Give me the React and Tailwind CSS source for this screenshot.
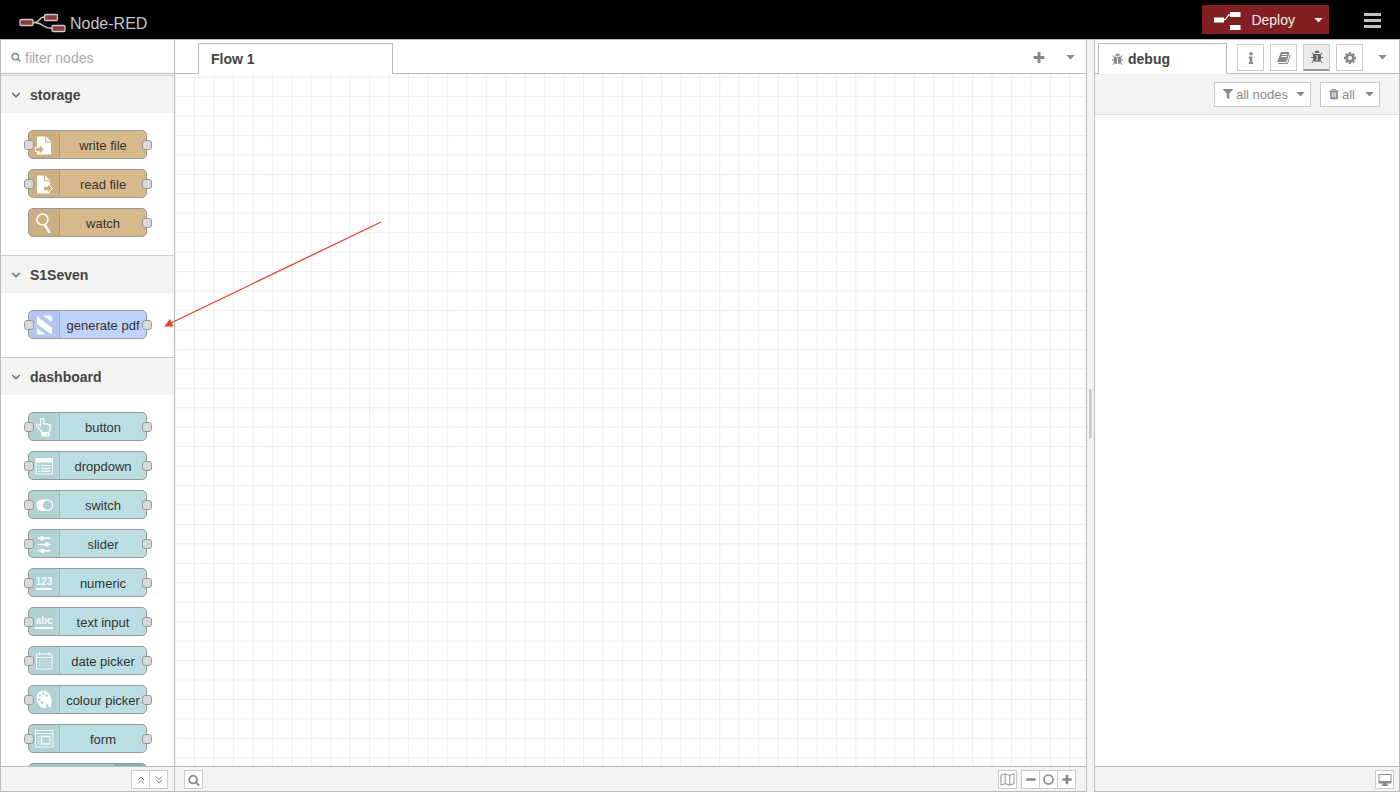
import React, { useState } from 'react';
import { FaInfo, FaFilter } from 'react-icons/fa';

// Solid glyphs, all on a 1792 unit grid
const glyphs = {
  search:
    'M1216 832q0-185-131.5-316.5t-316.5-131.5-316.5 131.5-131.5 316.5 131.5 316.5 316.5 131.5 316.5-131.5 131.5-316.5zm512 832q0 52-38 90t-90 38q-54 0-90-38l-343-342q-179 124-399 124-143 0-273.5-55.5t-225-150-150-225-55.5-273.5 55.5-273.5 150-225 225-150 273.5-55.5 273.5 55.5 225 150 150 225 55.5 273.5q0 220-124 399l343 343q37 37 37 90z',
  bug: 'M1696 960q0 26-19 45t-45 19h-224q0 171-67 290l208 209q19 19 19 45t-19 45q-18 19-45 19t-45-19l-198-197q-5 5-15 13t-42 28.5-65 36.5-82 29-97 13v-896h-128v896q-51 0-101.5-13.5t-87-33-66-39-43.5-32.5l-15-14-183 207q-20 21-48 21-24 0-43-16-19-18-20.5-44.5t15.5-46.5l202-227q-58-114-58-274h-224q-26 0-45-19t-19-45 19-45 45-19h224v-294l-173-173q-19-19-19-45t19-45 45-19 45 19l173 173h844l173-173q19-19 45-19t45 19 19 45-19 45l-173 173v294h224q26 0 45 19t19 45zm-480-576h-640q0-133 93.5-226.5t226.5-93.5 226.5 93.5 93.5 226.5z',
  cog: 'M1152 896q0-106-75-181t-181-75-181 75-75 181 75 181 181 75 181-75 75-181zm512-109v222q0 12-8 23t-20 13l-185 28q-19 54-39 91 35 50 107 138 10 12 10 25t-9 23q-27 37-99 108t-94 71q-12 0-26-9l-138-108q-44 23-91 38-16 136-29 186-7 28-36 28h-222q-14 0-24.5-8.5t-11.5-21.5l-28-184q-49-16-90-37l-141 107q-10 9-25 9-14 0-25-11-126-114-165-168-7-10-7-23 0-12 8-23 15-21 51-66.5t54-70.5q-27-50-41-99l-183-27q-13-2-21-12.5t-8-23.5v-222q0-12 8-23t19-13l186-28q14-46 39-92-40-57-107-138-10-12-10-24 0-10 9-23 26-36 98.5-107.5t94.5-71.5q13 0 26 10l138 107q44-23 91-38 16-136 29-186 7-28 36-28h222q14 0 24.5 8.5t11.5 21.5l28 184q49 16 90 37l142-107q9-9 24-9 13 0 25 10 129 119 165 170 7 8 7 22 0 12-8 23-15 21-51 66.5t-54 70.5q26 50 41 98l183 28q13 2 21 12.5t8 23.5z',
  book: 'M1703 478q40 57 18 129l-275 906q-19 64-76.5 107.5t-122.5 43.5h-923q-77 0-148.5-53.5t-99.5-131.5q-24-67-2-127 0-4 3-27t4-37q1-8-3-21.5t-3-19.5q2-11 8-21t16.5-23.5 16.5-23.5q23-38 45-91.5t30-91.5q3-10 .5-30t-.5-28q3-11 17-28t17-23q21-36 42-92t25-90q1-9-2.5-32t.5-28q4-13 22-30.5t22-22.5q19-26 42.5-84.5t27.5-96.5q1-8-3-25.5t-2-26.5q2-8 9-18t18-23 17-21q8-12 16.5-30.5t15-35 16-36 19.5-32 26.5-23.5 36-11.5 47.5 5.5l-1 3q38-9 51-9h761q74 0 114 56t18 130l-274 906q-36 119-71.5 153.5t-128.5 34.5h-869q-27 0-38 15-11 16-1 43 24 70 144 70h923q29 0 56-15.5t35-41.5l300-987q7-22 5-57 38 15 59 43zm-1064 2q-4 13 2 22.5t20 9.5h608q13 0 25.5-9.5t16.5-22.5l21-64q4-13-2-22.5t-20-9.5h-608q-13 0-25.5 9.5t-16.5 22.5zm-83 256q-4 13 2 22.5t20 9.5h608q13 0 25.5-9.5t16.5-22.5l21-64q4-13-2-22.5t-20-9.5h-608q-13 0-25.5 9.5t-16.5 22.5z',
  trash:
    'M704 1376v-704q0-14-9-23t-23-9h-64q-14 0-23 9t-9 23v704q0 14 9 23t23 9h64q14 0 23-9t9-23zm256 0v-704q0-14-9-23t-23-9h-64q-14 0-23 9t-9 23v704q0 14 9 23t23 9h64q14 0 23-9t9-23zm256 0v-704q0-14-9-23t-23-9h-64q-14 0-23 9t-9 23v704q0 14 9 23t23 9h64q14 0 23-9t9-23zm-544-992h448l-48-117q-7-9-17-11h-317q-10 2-17 11zm928 32v64q0 14-9 23t-23 9h-96v948q0 83-47 143.5t-113 60.5h-832q-66 0-113-58.5t-47-141.5v-952h-96q-14 0-23-9t-9-23v-64q0-14 9-23t23-9h309l70-167q15-37 54-63t79-26h320q40 0 79 26t54 63l70 167h309q14 0 23 9t9 23z',
  plus: 'M1600 736v192q0 40-28 68t-68 28h-416v416q0 40-28 68t-68 28h-192q-40 0-68-28t-28-68v-416h-416q-40 0-68-28t-28-68v-192q0-40 28-68t68-28h416v-416q0-40 28-68t68-28h192q40 0 68 28t28 68v416h416q40 0 68 28t28 68z',
  minus: 'M1600 736v192q0 40-28 68t-68 28h-1216q-40 0-68-28t-28-68v-192q0-40 28-68t68-28h1216q40 0 68 28t28 68z',
};

function Glyph({ name, className }) {
  return (
    <svg viewBox="0 0 1792 1792" fill="currentColor" className={`shrink-0 ${className}`}>
      <path d={glyphs[name]} />
    </svg>
  );
}

function Caret() {
  return (
    <svg viewBox="0 0 9 5" fill="currentColor" className="h-[5px] w-[9px] shrink-0">
      <path d="M.3 0h8.400L4.500 4.600z" />
    </svg>
  );
}

// 20x20 drawings shown in the icon area of each palette node
const nodeIcons = {
  write: (
    <g fill="white">
      <path d="M3 1.500h8v6h6v12H3z" />
      <path d="M12.200 1.500l5 5h-5z" />
      <path d="M1.300 12.300h4V9.700l5 4.800-5 4.800v-2.600h-4z" fill="#cdb085" stroke="white" />
    </g>
  ),
  read: (
    <g fill="white">
      <path d="M3 1.500h7v6h6v12H3z" />
      <path d="M11.200 1.500l5 5h-5z" />
      <path d="M9.500 12.300h4V9.700l5 4.800-5 4.800v-2.600h-4z" fill="#cdb085" stroke="white" />
    </g>
  ),
  watch: (
    <g fill="none" stroke="white">
      <circle cx="8.500" cy="6.500" r="5.500" strokeWidth="1.500" />
      <path d="M11.500 13l4 6.500" strokeWidth="2.600" strokeLinecap="round" />
      <path d="M10.500 11l1.500 2.500" strokeWidth="1.300" />
    </g>
  ),
  pdf: (
    <g fill="white">
      <path d="M3 1l15 12v4.500q0 2-2 1L3 9z" />
      <path d="M9 .5h7.500q1.500 0 1.500 1.500v5z" />
      <path d="M3 13l8.500 6.500h-7Q3 19.500 3 18z" />
    </g>
  ),
  button: (
    <g fill="none" stroke="white" strokeWidth="1.200" strokeLinejoin="round">
      <path d="M6.500 9V3a1.700 1.700 0 0 1 3.400 0v4q1.200-1 2.300.3 1.300-.8 2.200.4 1.700-.4 2.100 1.300.3 3.500-1.800 6.700H7.800L6.500 13 2.700 9.200Q1.800 6.800 4 7.200z" />
      <path d="M7.500 15.700h8v3.800h-8z" fill="white" stroke="none" />
      <circle cx="13.200" cy="17.600" r=".8" fill="#afd1d4" stroke="none" />
    </g>
  ),
  dropdown: (
    <g fill="none" stroke="white">
      <path d="M2 2.500h16.500v15.500H2z" />
      <path d="M1.500 2h17.500v4.500H1.500z" fill="white" stroke="none" />
      <path d="M4 9.500h1.500M7 9.500h9.500M4 12.300h1.500M7 12.300h9.500M4 15.100h1.500M7 15.100h9.500" strokeWidth="1.200" />
    </g>
  ),
  switch: (
    <path
      d="M8 4.500h5.500a5.700 5.700 0 0 1 0 11.400H8a5.700 5.700 0 0 1 0-11.400zm5.500 1.100a4.600 4.600 0 0 0 0 9.200 4.600 4.600 0 0 0 0-9.200z"
      fill="white"
      fillRule="evenodd"
    />
  ),
  slider: (
    <g fill="white" stroke="white" strokeWidth="1.600">
      <path d="M3.500 4.200h13M3.500 10.500h13M3.500 16.800h13" />
      <path d="M7 3h2v2.400H7zM12 9.300h2v2.400h-2zM7.500 15.600h2V18h-2z" strokeLinejoin="round" />
    </g>
  ),
  date: (
    <g fill="none" stroke="white" strokeOpacity=".9">
      <rect x="2.500" y="3" width="15.500" height="15" rx="1" />
      <path d="M2.500 6.500H18M5.500 1v3.500M15 1v3.500" />
      <path d="M5 9.500h11M5 12h11M5 14.500h11" strokeDasharray="1.200 1.200" strokeOpacity=".7" />
    </g>
  ),
  colour: (
    <g fill="#afd1d4">
      <path
        d="M9 .7C4.500.7 2.300 4.500 2.700 9c.5 5 4 8.500 7.300 9.200 2.800.5 1.500-2.400 2.200-4 .8-1.500 2 1 2.300 2.300.4 1.400 1.800 1 2.400-.5C19.300 8.500 15.500.7 9 .7z"
        fill="white"
      />
      <circle cx="5.300" cy="9.500" r="1.300" />
      <circle cx="5.800" cy="5.500" r="1.300" />
      <circle cx="9.300" cy="3.400" r="1.200" />
      <circle cx="12.600" cy="5.500" r="1.300" />
      <circle cx="8" cy="12.500" r="1.300" />
    </g>
  ),
  form: (
    <g fill="none" stroke="white" strokeOpacity=".85">
      <path d="M1.500 1.500h17.500V18H1.500zM1.500 4.500H19" />
      <path d="M7.500 7.500H16V15H7.500z" strokeWidth="1.400" />
      <path d="M3.500 7.500h1.800M3.500 10h1.800M3.500 12.500h1.800M3.500 15h1.800" />
    </g>
  ),
};

const categories = [
  {
    name: 'storage',
    color: 'bg-[#d8b98c]',
    nodes: [
      { label: 'write file', icon: 'write', input: true },
      { label: 'read file', icon: 'read', input: true },
      { label: 'watch', icon: 'watch', input: false },
    ],
  },
  {
    name: 'S1Seven',
    color: 'bg-[#bfd2f9]',
    nodes: [{ label: 'generate pdf', icon: 'pdf', input: true }],
  },
  {
    name: 'dashboard',
    color: 'bg-[#badee1]',
    nodes: [
      { label: 'button', icon: 'button', input: true },
      { label: 'dropdown', icon: 'dropdown', input: true },
      { label: 'switch', icon: 'switch', input: true },
      { label: 'slider', icon: 'slider', input: true },
      { label: 'numeric', icon: 'numeric', input: true },
      { label: 'text input', icon: 'text', input: true },
      { label: 'date picker', icon: 'date', input: true },
      { label: 'colour picker', icon: 'colour', input: true },
      { label: 'form', icon: 'form', input: true },
      { label: 'text', icon: 'output', input: true, dark: true },
    ],
  },
];

function NodeIcon({ name }) {
  if (name === 'numeric' || name === 'text') {
    return (
      <span className="border-b-2 border-white/90 text-[10px] leading-3 font-bold text-white/85">
        {name === 'numeric' ? '123' : 'abc'}
      </span>
    );
  }
  return <svg viewBox="0 0 20 20" className="size-5">{nodeIcons[name]}</svg>;
}

function Port({ side }) {
  return (
    <span
      className={`absolute top-[9px] size-[10px] rounded-[3px] border border-[#999] bg-[#d9d9d9] ${
        side === 'left' ? '-left-[5px]' : '-right-[6px]'
      }`}
    />
  );
}

function PaletteNode({ node, color }) {
  return (
    <div
      className={`relative flex h-[29px] w-[119px] shrink-0 rounded-[5px] border border-[#999] ${
        node.dark ? 'bg-[#8fc7cc]' : color
      }`}
    >
      {node.dark ? (
        <div className="ml-auto w-[31px] rounded-r border-l border-black/10 bg-black/10" />
      ) : (
        <>
          <div className="flex w-[31px] items-center justify-center rounded-l border-r border-black/10 bg-black/5">
            <NodeIcon name={node.icon} />
          </div>
          <div className="flex flex-1 items-center justify-center pt-[2px] text-[13px] whitespace-nowrap text-[#333]">
            {node.label}
          </div>
          {node.input && <Port side="left" />}
          <Port side="right" />
        </>
      )}
    </div>
  );
}

function Category({ category }) {
  const [open, setOpen] = useState(true);
  return (
    <section>
      <button
        onClick={() => setOpen(!open)}
        className="flex h-[38px] w-full items-center border-t border-[#ccc] bg-[#f3f3f3] pt-[2px] pl-[10px] text-[14px] font-bold text-[#444]"
      >
        <svg viewBox="0 0 10 6" fill="none" stroke="#666" strokeWidth="1.300" className="mr-[9px] mb-[2px] h-[6px] w-[10px]">
          <path d="M1.200 1L5 4.800 8.800 1" />
        </svg>
        {category.name}
      </button>
      {open && (
        <div className="flex flex-col gap-[10px] pt-[17px] pb-[18px] pl-[27px]">
          {category.nodes.map((node) => (
            <PaletteNode key={node.label} node={node} color={category.color} />
          ))}
        </div>
      )}
    </section>
  );
}

function Header() {
  return (
    <header className="flex h-10 shrink-0 items-center border-b border-[#bbb] bg-black px-[19px]">
      <svg viewBox="0 0 47 20" className="mt-[6px] h-5 w-[47px]">
        <g fill="none" stroke="#ccc" strokeWidth="1.300">
          <path d="M14 9.500c9 0 4-5.500 12-5.500M14 9.500c12 0 8 6 19 6" />
          <g fill="#8f3a38">
            <rect x="1" y="6.500" width="13" height="6" rx="1.200" />
            <rect x="25.500" y="1.500" width="13" height="6" rx="1.200" />
            <rect x="33" y="12.500" width="13" height="6" rx="1.200" />
          </g>
        </g>
      </svg>
      <h1 className="mt-2 ml-1 text-[16px] leading-5 text-[#c7c7c7]">Node-RED</h1>
      <div className="ml-auto flex h-[29px] bg-[#811f22] text-[#eee]">
        <button className="flex items-center pt-[2px] pl-3 text-[14px]">
          <svg viewBox="0 0 27 18" className="mr-[10px] h-[18px] w-[27px]">
            <g fill="white">
              <path d="M0 5.500h10v5H0zM16 0h10.500v5H16zM16 13h10.500v5H16z" />
              <path d="M9 8c5 0 3-5.500 8-5.500" fill="none" stroke="white" strokeWidth="1.300" />
            </g>
          </svg>
          Deploy
        </button>
        <button aria-label="Deploy options" className="flex w-[34px] items-center justify-center pt-[2px] pl-3">
          <Caret />
        </button>
      </div>
      <button aria-label="Menu" className="mt-[2px] ml-[35px] flex w-[17px] flex-col gap-[3px]">
        <span className="h-[3px] w-full bg-[#c0c0c0]" />
        <span className="h-[3px] w-full bg-[#c0c0c0]" />
        <span className="h-[3px] w-full bg-[#c0c0c0]" />
      </button>
    </header>
  );
}

function SmallButton({ label, joined, children }) {
  return (
    <button
      aria-label={label}
      className={`flex size-[19px] items-center justify-center border border-[#ccc] bg-white text-[#888] ${
        joined ? '-ml-px' : ''
      }`}
    >
      {children}
    </button>
  );
}

function Palette() {
  const [filter, setFilter] = useState('');
  return (
    <aside className="flex w-[175px] shrink-0 flex-col border-r border-l border-[#bbb] bg-white">
      <label className="flex h-[34px] shrink-0 items-center border-b border-[#bbb] pt-[2px] pl-[10px]">
        <Glyph name="search" className="mr-1 mb-[2px] size-[10px] text-[#888]" />
        <input
          type="text"
          aria-label="filter nodes"
          placeholder="filter nodes"
          value={filter}
          onChange={(e) => setFilter(e.target.value)}
          className="w-full min-w-0 pt-[2px] text-[14px] text-[#444] outline-none placeholder:text-[#aaa]"
        />
      </label>
      <div className="min-h-0 flex-1 overflow-hidden pt-px">
        {categories.map((category) => (
          <Category key={category.name} category={category} />
        ))}
      </div>
      <footer className="flex h-[26px] shrink-0 items-center justify-end border-t border-b border-[#bbb] bg-[#f3f3f3] pt-px pr-[6px]">
        <SmallButton label="Collapse all">
          <svg viewBox="0 0 8 8" fill="none" stroke="currentColor" className="size-2">
            <path d="M1 4l3-3 3 3M1 7.500l3-3 3 3" />
          </svg>
        </SmallButton>
        <SmallButton label="Expand all" joined>
          <svg viewBox="0 0 8 8" fill="none" stroke="currentColor" className="size-2">
            <path d="M1 .5l3 3 3-3M1 4l3 3 3-3" />
          </svg>
        </SmallButton>
      </footer>
    </aside>
  );
}

function Workspace() {
  return (
    <main className="flex min-w-0 flex-1 flex-col border-r border-[#bbb] bg-white">
      <div className="flex h-[34px] shrink-0 items-end">
        <div className="h-full w-[23px] border-b border-[#bbb]" />
        <button className="h-[31px] w-[195px] border border-b-0 border-[#bbb] pl-3 text-left text-[14px] font-bold text-[#444]">
          Flow 1
        </button>
        <div className="flex h-full flex-1 items-center justify-end border-b border-[#bbb] pt-[2px] pr-[11px] text-[#888]">
          <button aria-label="Add flow"><Glyph name="plus" className="size-[14px]" /></button>
          <button aria-label="List flows" className="ml-5"><Caret /></button>
        </div>
      </div>
      <div className="relative min-h-0 flex-1 overflow-hidden">
        <svg className="absolute inset-0 size-full">
          <defs>
            <pattern id="grid" x="19" y="2.500" width="19.450" height="19.450" patternUnits="userSpaceOnUse">
              <path d="M.5 0v19.450M0 .5h19.450" fill="none" stroke="#eee" strokeWidth="1.200" />
            </pattern>
          </defs>
          <rect width="100%" height="100%" fill="url(#grid)" />
        </svg>
      </div>
      <footer className="flex h-[26px] shrink-0 items-center border-t border-b border-[#bbb] bg-[#f3f3f3] pt-px pr-[10px] pl-[9px]">
        <SmallButton label="Search flows"><Glyph name="search" className="size-3" /></SmallButton>
        <div className="ml-auto flex">
          <SmallButton label="Toggle navigator">
            <svg viewBox="0 0 16 14" className="h-[13px] w-[15px] shrink-0" fill="none" stroke="currentColor">
              <path d="M1 2.500L5.500 1l5 1.500L15 1v10.500L10.500 13l-5-1.500L1 13zM5.500 1v10.500M10.500 2.500V13" />
            </svg>
          </SmallButton>
          <div className="ml-1 flex">
            <SmallButton label="Zoom out"><Glyph name="minus" className="size-3" /></SmallButton>
            <SmallButton label="Reset zoom" joined>
              <svg viewBox="0 0 11 11" fill="none" stroke="currentColor" strokeWidth="1.600" className="size-[11px]">
                <circle cx="5.500" cy="5.500" r="4.500" />
              </svg>
            </SmallButton>
            <SmallButton label="Zoom in" joined><Glyph name="plus" className="size-3" /></SmallButton>
          </div>
        </div>
      </footer>
    </main>
  );
}

function SidebarTab({ label, active, children }) {
  return (
    <button
      aria-label={label}
      className={`flex size-[27px] items-center justify-center border ${
        active ? 'border-[#ccc] border-b-2 border-b-[#999] bg-[#ebebeb] text-[#666]' : 'border-[#ccc] bg-white text-[#888]'
      }`}
    >
      {children}
    </button>
  );
}

function Sidebar() {
  return (
    <aside className="flex w-[306px] shrink-0 flex-col border-r border-l border-[#bbb] bg-white">
      <div className="flex h-[34px] shrink-0 items-end">
        <div className="h-full w-[3px] border-b border-[#bbb]" />
        <button className="flex h-[31px] w-[129px] items-center border border-b-0 border-[#bbb] pl-3 text-[14px] font-bold text-[#444]">
          <Glyph name="bug" className="mr-1 size-[13px] text-[#888]" />
          debug
        </button>
        <div className="flex h-full flex-1 items-center gap-[6px] border-b border-[#bbb] pt-[2px] pl-[10px]">
          <SidebarTab label="Information"><FaInfo className="size-3" /></SidebarTab>
          <SidebarTab label="Help"><Glyph name="book" className="size-[14px]" /></SidebarTab>
          <SidebarTab label="Debug messages" active><Glyph name="bug" className="size-[14px]" /></SidebarTab>
          <SidebarTab label="Configuration nodes"><Glyph name="cog" className="size-[14px]" /></SidebarTab>
          <button aria-label="More tabs" className="ml-[9px] text-[#888]"><Caret /></button>
        </div>
      </div>
      <div className="flex h-[41px] shrink-0 items-center justify-end gap-[9px] border-b border-[#ddd] bg-[#f3f3f3] pr-[19px] text-[13px] text-[#888]">
        <button className="flex h-[25px] items-center border border-[#ccc] bg-white pr-[5px] pl-2">
          <FaFilter className="mr-[3px] size-[10px]" />
          <span className="mr-2 pt-px">all nodes</span>
          <Caret />
        </button>
        <button className="flex h-[25px] items-center border border-[#ccc] bg-white pr-[5px] pl-[7px]">
          <Glyph name="trash" className="mr-[2px] size-3" />
          <span className="mr-[10px] pt-px">all</span>
          <Caret />
        </button>
      </div>
      <div className="flex-1" />
      <footer className="flex h-[26px] shrink-0 items-center justify-end border-t border-b border-[#bbb] bg-[#f3f3f3] pt-px pr-[5px]">
        <SmallButton label="Open debug window">
          <svg viewBox="0 0 14 12" className="h-3 w-[14px] shrink-0" fill="currentColor">
            <path d="M1.500 0h11q1 0 1 1v7.500q0 1-1 1h-11q-1 0-1-1V1q0-1 1-1zm0 1v6h11V1z" fillRule="evenodd" />
            <path d="M5 9h4v1.500h1V12H4v-1.500h1z" />
          </svg>
        </SmallButton>
      </footer>
    </aside>
  );
}

function App() {
  return (
    <div className="relative flex h-screen flex-col overflow-hidden bg-[#f3f3f3] font-['Helvetica_Neue','Liberation_Sans',sans-serif]">
      <Header />
      <div className="flex min-h-0 flex-1">
        <Palette />
        <Workspace />
        <div className="flex w-[7px] shrink-0 items-center justify-center pb-[6px]">
          <div className="h-[49px] w-[3px] bg-[#ccc]" />
        </div>
        <Sidebar />
      </div>
      {/* Arrow pointing at the generate pdf node */}
      <svg className="pointer-events-none absolute top-[220px] left-[163px] h-[110px] w-[220px]">
        <path d="M218 2L8 103" stroke="#e8432d" strokeWidth="1.300" />
        <path d="M1 106.500l6-7.500 3.500 7.500z" fill="#e8432d" />
      </svg>
    </div>
  );
}

export default App;
